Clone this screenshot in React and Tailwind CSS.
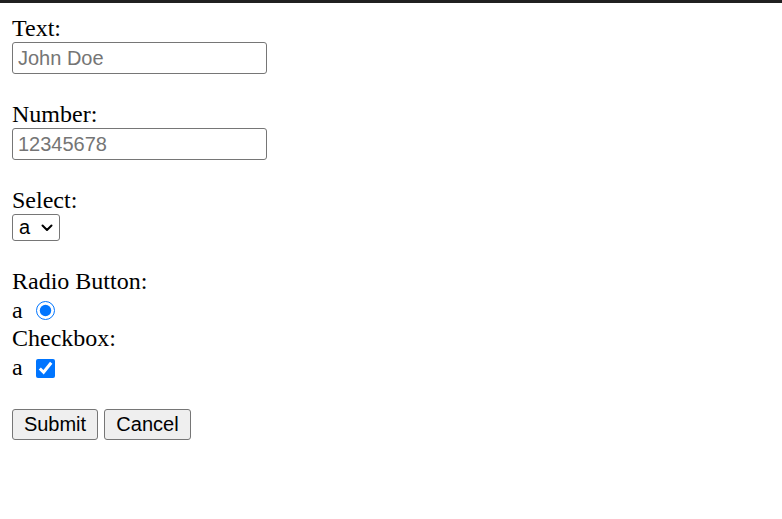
import { useState } from "react";

function Chevron() {
  return (
    <svg width="12" height="8" viewBox="0 0 12 8" className="pointer-events-none absolute right-[7px] top-[10px]">
      <path d="M1.5 1.5 L6 6 L10.5 1.5" fill="none" stroke="#000" strokeWidth="2" strokeLinecap="round" strokeLinejoin="round" />
    </svg>
  );
}

export default function App() {
  const [text, setText] = useState("");
  const [num, setNum] = useState("");

  return (
    <div className="min-h-screen bg-white">
      <div className="h-[3px] bg-[#202020]" />
      <form
        className="px-3 pt-3 font-['Liberation_Serif',serif] text-[24px] leading-[27px] text-black"
        onSubmit={(e) => e.preventDefault()}
      >
        {/* Text */}
        <div>Text:</div>
        <input
          type="text"
          value={text}
          onChange={(e) => setText(e.target.value)}
          placeholder="John Doe"
          className="block h-[32px] w-[255px] rounded-[3px] border border-[#767676] px-[5px] font-['Liberation_Sans',Arial,sans-serif] text-[20px] placeholder:text-[#757575] outline-none"
        />
        <div className="h-[27px]" />

        {/* Number */}
        <div>Number:</div>
        <input
          type="text"
          value={num}
          onChange={(e) => setNum(e.target.value)}
          placeholder="12345678"
          className="block h-[32px] w-[255px] rounded-[3px] border border-[#767676] px-[5px] font-['Liberation_Sans',Arial,sans-serif] text-[20px] placeholder:text-[#757575] outline-none"
        />
        <div className="h-[27px]" />

        {/* Select */}
        <div>Select:</div>
        <div className="relative h-[27px] w-[48px]">
          <select className="block h-[27px] w-[48px] appearance-none rounded-[3px] border border-[#767676] pl-[6px] font-['Liberation_Sans',Arial,sans-serif] text-[20px] leading-[25px] outline-none">
            <option>a</option>
            <option>b</option>
          </select>
          <Chevron />
        </div>
        <div className="h-[27px]" />

        {/* Radio */}
        <div>Radio Button:</div>
        <div className="flex h-[29px] items-center">
          <span className="mt-[1px]">a</span>
          <input type="radio" name="r" defaultChecked className="ml-[13px] mt-[1px] h-[19px] w-[19px] accent-[#0075ff]" />
        </div>
        <div className="pt-[1px]">Checkbox:</div>
        <div className="flex h-[29px] items-center">
          <span className="mt-[2px]">a</span>
          <input type="checkbox" defaultChecked className="ml-[13px] mt-[3px] h-[19px] w-[19px] accent-[#0075ff]" />
        </div>
        <div className="h-[28px]" />

        {/* Buttons */}
        <div className="flex gap-[6px]">
          <button type="submit" className="h-[31px] w-[86px] rounded-[3px] border border-[#767676] bg-[#efefef] font-['Liberation_Sans',Arial,sans-serif] text-[20px] leading-[29px]">
            Submit
          </button>
          <button type="button" className="h-[31px] w-[87px] rounded-[3px] border border-[#767676] bg-[#efefef] font-['Liberation_Sans',Arial,sans-serif] text-[20px] leading-[29px]">
            Cancel
          </button>
        </div>
      </form>
    </div>
  );
}
